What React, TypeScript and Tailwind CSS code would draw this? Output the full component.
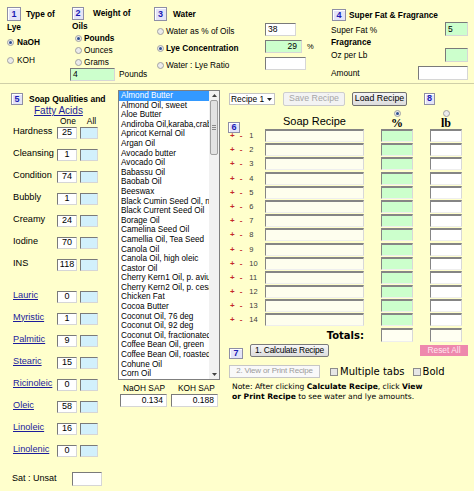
import React from 'react';

const arial = "font-['Liberation_Sans',Arial,sans-serif]";
const verdana = "font-['DejaVu_Sans',Verdana,sans-serif]";
const serif = "font-['Liberation_Serif','Times_New_Roman',serif]";

const oils = [
  'Almond Butter',
  'Almond Oil, sweet',
  'Aloe Butter',
  'Andiroba Oil,karaba,crabwood',
  'Apricot Kernal Oil',
  'Argan Oil',
  'Avocado butter',
  'Avocado Oil',
  'Babassu Oil',
  'Baobab Oil',
  'Beeswax',
  'Black Cumin Seed Oil, nigella sativa',
  'Black Current Seed Oil',
  'Borage Oil',
  'Camelina Seed Oil',
  'Camellia Oil, Tea Seed',
  'Canola Oil',
  'Canola Oil, high oleic',
  'Castor Oil',
  'Cherry Kern1 Oil, p. avium',
  'Cherry Kern2 Oil, p. cesarus',
  'Chicken Fat',
  'Cocoa Butter',
  'Coconut Oil, 76 deg',
  'Coconut Oil, 92 deg',
  'Coconut Oil, fractionated',
  'Coffee Bean Oil, green',
  'Coffee Bean Oil, roasted',
  'Cohune Oil',
  'Corn Oil',
];

const qualities = [
  { label: 'Hardness', value: '25' },
  { label: 'Cleansing', value: '1' },
  { label: 'Condition', value: '74' },
  { label: 'Bubbly', value: '1' },
  { label: 'Creamy', value: '24' },
  { label: 'Iodine', value: '70' },
  { label: 'INS', value: '118' },
];

const acids = [
  { label: 'Lauric', value: '0' },
  { label: 'Myristic', value: '1' },
  { label: 'Palmitic', value: '9' },
  { label: 'Stearic', value: '15' },
  { label: 'Ricinoleic', value: '0' },
  { label: 'Oleic', value: '58' },
  { label: 'Linoleic', value: '16' },
  { label: 'Linolenic', value: '0' },
];

const NumBox = ({ n, size }: { n: string; size: string }) => (
  <span
    className={`${size} inline-flex shrink-0 items-center justify-center border border-[#8e8ea6] bg-[#e4e4f8] text-[9px] font-bold leading-none text-[#1a1ab4] shadow-[inset_1px_1px_0_#ffffff] ${arial}`}
  >
    {n}
  </span>
);

const Radio = ({ on }: { on?: boolean }) => (
  <span className="inline-flex h-[7px] w-[7px] shrink-0 items-center justify-center rounded-full border border-[#a2a2a2] bg-[#ebebeb]">
    {on && <span className="h-[3px] w-[3px] rounded-full bg-[#2f4f8f]" />}
  </span>
);

const Check = () => (
  <span className="inline-block h-[8px] w-[8px] shrink-0 border border-[#8c8c8c] bg-[#e6e6e6]" />
);

// sunken text box, as the old form inputs draw it
const Field = ({ className = '', children }: { className?: string; children?: React.ReactNode }) => (
  <div
    className={`flex items-center border border-t-[#7a7a7a] border-l-[#7a7a7a] border-r-[#d6d6d6] border-b-[#d6d6d6] ${className}`}
  >
    {children}
  </div>
);

const Cell = ({ className = '', children }: { className?: string; children?: React.ReactNode }) => (
  <div
    className={`border-t-[2px] border-l border-r border-b border-t-[#858585] border-l-[#858585] border-r-[#d8d8d8] border-b-[#eeeeee] ${className}`}
  >
    {children}
  </div>
);

const QualityRow = ({ label, value, link }: { label: string; value: string; link?: boolean }) => (
  <div className="flex h-[14px] items-center">
    <div className="w-[57px] whitespace-nowrap pb-[3px] pl-[13px] text-[9.2px]">
      {link ? <span className="text-[#1c1c9c] underline">{label}</span> : label}
    </div>
    <Field className="h-[12px] w-[20px] justify-center bg-white text-[9px]">{value}</Field>
    <Field className="ml-[3px] h-[12px] w-[18px] bg-[#d2f0fc]" />
  </div>
);

const Scrollbar = () => (
  <div className="flex w-[10px] shrink-0 flex-col bg-[#f1f1f1]">
    <div className="flex h-[9px] items-center justify-center">
      <svg width="5" height="3" viewBox="0 0 5 3">
        <polygon points="0,3 2.5,0 5,3" fill="#404040" />
      </svg>
    </div>
    <div className="mx-[1px] flex h-[55px] flex-col items-center justify-center gap-[1px] rounded-[2px] border border-[#a0a0a0] bg-[#e2e2e2]">
      <span className="h-px w-[4px] bg-[#8a8a8a]" />
      <span className="h-px w-[4px] bg-[#8a8a8a]" />
      <span className="h-px w-[4px] bg-[#8a8a8a]" />
    </div>
    <div className="flex-1" />
    <div className="flex h-[9px] items-center justify-center">
      <svg width="5" height="3" viewBox="0 0 5 3">
        <polygon points="0,0 2.5,3 5,0" fill="#404040" />
      </svg>
    </div>
  </div>
);

const grid = 'grid grid-cols-[45px_99px_17px_32px_17px_32px]';

export default function App() {
  return (
    <div className={`h-[491px] w-[474px] overflow-hidden bg-[#ffffcc] text-black ${arial}`}>
      {/* Top: steps 1 to 4 */}
      <div className="flex h-[84px] border-b border-[#cfcfa8] text-[8.3px]">
        <div className="w-[68px] shrink-0 pl-[7px] pt-[7px]">
          <div className="flex h-[14px] items-center">
            <NumBox n="1" size="w-[14px] h-[14px]" />
            <span className="ml-[5px] font-bold">Type of</span>
          </div>
          <div className="flex h-[13px] items-center font-bold">Lye</div>
          <div className="flex h-[16px] items-center gap-[3px]">
            <Radio on />
            <span className="font-bold">NaOH</span>
          </div>
          <div className="flex h-[20px] items-center gap-[3px]">
            <Radio />
            <span>KOH</span>
          </div>
        </div>

        <div className="w-[85px] shrink-0 pt-[7px]">
          <div className="flex h-[13px] items-center pl-[4px]">
            <NumBox n="2" size="w-[12px] h-[13px]" />
            <span className="ml-[9px] font-bold">Weight of</span>
          </div>
          <div className="flex h-[12px] items-center pl-[4px] font-bold">Oils</div>
          <div className="flex h-[12px] items-center gap-[2px] pl-[7px]">
            <Radio on />
            <span className="font-bold">Pounds</span>
          </div>
          <div className="flex h-[12px] items-center gap-[2px] pl-[7px]">
            <Radio />
            <span>Ounces</span>
          </div>
          <div className="flex h-[12px] items-center gap-[2px] pl-[7px]">
            <Radio />
            <span>Grams</span>
          </div>
          <div className="flex h-[13px] items-center pl-[2px]">
            <Field className="h-[13px] w-[45px] bg-[#ccffcc] pl-[2px] text-[8.5px]">4</Field>
            <span className="ml-[4px]">Pounds</span>
          </div>
        </div>

        <div className="w-[175px] shrink-0 pt-[7px]">
          <div className="flex h-[14px] items-center pl-[1px]">
            <NumBox n="3" size="w-[13px] h-[14px]" />
            <span className="ml-[6px] font-bold">Water</span>
          </div>
          <div className="flex h-[17px] items-center">
            <div className="flex w-[112px] items-center gap-[2px] pl-[4px] pt-[3px]">
              <Radio />
              <span>Water as % of Oils</span>
            </div>
            <Field className="h-[13px] w-[31px] bg-white pl-[2px] text-[8.5px]">38</Field>
          </div>
          <div className="flex h-[17px] items-center">
            <div className="flex w-[112px] items-center gap-[2px] whitespace-nowrap pl-[4px] pt-[3px]">
              <Radio on />
              <span className="font-bold">Lye Concentration</span>
            </div>
            <Field className="h-[13px] w-[37px] justify-end bg-[#ccffcc] pr-[4px] text-[8.5px]">29</Field>
            <span className="ml-[5px] text-[7.5px]">%</span>
          </div>
          <div className="flex h-[17px] items-center">
            <div className="flex w-[112px] items-center gap-[2px] pl-[4px] pt-[3px]">
              <Radio />
              <span>Water : Lye Ratio</span>
            </div>
            <Field className="h-[13px] w-[41px] bg-white" />
          </div>
        </div>

        <div className="flex-1 pr-[6px] pt-[9px]">
          <div className="flex h-[12px] items-center pl-[4px]">
            <NumBox n="4" size="w-[14px] h-[12px]" />
            <span className="ml-[3px] whitespace-nowrap font-bold">Super Fat &amp; Fragrance</span>
          </div>
          <div className="mt-[1px] flex h-[14px] items-center justify-between pl-[3px]">
            <span className="pt-[2px]">Super Fat %</span>
            <Field className="h-[14px] w-[23px] bg-[#ccffcc] pl-[2px] text-[8.5px]">5</Field>
          </div>
          <div className="flex h-[12px] items-center pl-[3px] font-bold">Fragrance</div>
          <div className="flex h-[14px] items-center justify-between pl-[3px]">
            <span>Oz per Lb</span>
            <Field className="h-[14px] w-[23px] bg-[#ccffcc]" />
          </div>
          <div className="mt-[4px] flex h-[14px] items-center justify-between pl-[3px]">
            <span>Amount</span>
            <Field className="h-[14px] w-[50px] bg-white" />
          </div>
        </div>
      </div>

      {/* Bottom: qualities, oil list, recipe */}
      <div className="flex">
        <div className="w-[116px] shrink-0">
          <div className="mt-[9px] flex h-[12px] items-center pl-[11px]">
            <NumBox n="5" size="w-[12px] h-[12px]" />
            <span className="ml-[6px] whitespace-nowrap text-[8.5px] font-bold">Soap Qualities and</span>
          </div>
          <div className="flex h-[11px] items-center pl-[34px]">
            <span className="text-[10px] text-[#1c1c9c] underline">Fatty Acids</span>
          </div>
          <div className="flex h-[10px] items-center text-[8.4px]">
            <span className="ml-[60px]">One</span>
            <span className="ml-[11px]">All</span>
          </div>
          <div className="flex flex-col gap-[8px]">
            {qualities.map((q) => (
              <QualityRow key={q.label} label={q.label} value={q.value} />
            ))}
          </div>
          <div className="mt-[18px] flex flex-col gap-[8px]">
            {acids.map((a) => (
              <QualityRow key={a.label} label={a.label} value={a.value} link />
            ))}
          </div>
          <div className="mt-[14px] flex h-[14px] items-center">
            <span className="w-[72px] pl-[12px] text-[9px]">Sat : Unsat</span>
            <Field className="h-[14px] w-[30px] bg-white" />
          </div>
        </div>

        <div className="w-[104px] shrink-0 pl-[2px] pt-[6px]">
          <div className="flex h-[290px] w-[102px] border border-[#7f7f7f] bg-white">
            <div className="min-w-0 flex-1 overflow-hidden text-[8.2px] leading-[9.6px]">
              {oils.map((o, i) => (
                <div
                  key={o}
                  className={`overflow-hidden whitespace-nowrap pl-[2px] ${i === 0 ? 'bg-[#3399ff] text-white' : ''}`}
                >
                  {o}
                </div>
              ))}
            </div>
            <Scrollbar />
          </div>
          <div className="mt-[3px] flex h-[10px] items-center text-[8.3px]">
            <span className="ml-[5px]">NaOH SAP</span>
            <span className="ml-[13px]">KOH SAP</span>
          </div>
          <div className="mt-[1px] flex gap-[4px] pl-[2px]">
            <Field className="h-[13px] w-[47px] justify-end bg-white pr-[3px] text-[8.5px]">0.134</Field>
            <Field className="h-[13px] w-[47px] justify-end bg-white pr-[3px] text-[8.5px]">0.188</Field>
          </div>
        </div>

        <div className="flex-1 pt-[8px]">
          <div className="flex h-[14px] items-center text-[8.8px]">
            <div className="ml-[9px] flex h-[12px] w-[46px] items-center whitespace-nowrap border border-[#c4c4c4] bg-white pl-[1px] text-[8.4px]">
              <span>Recipe 1</span>
              <svg className="ml-[3px] shrink-0" width="5" height="3" viewBox="0 0 5 3">
                <polygon points="0,0 2.5,3 5,0" fill="#202020" />
              </svg>
            </div>
            <div className="ml-[8px] flex h-[14px] w-[62px] items-center justify-center rounded-[2px] border border-[#cdcdcd] bg-[#f3f3f3] text-[#a6a6a6]">
              Save Recipe
            </div>
            <div className="ml-[7px] flex h-[14px] w-[55px] items-center justify-center rounded-[2px] border border-[#707070] bg-gradient-to-b from-[#f4f4f4] to-[#dcdcdc]">
              Load Recipe
            </div>
            <div className="ml-[17px] self-start">
              <NumBox n="8" size="w-[11px] h-[12px]" />
            </div>
          </div>

          <div className={`${grid} h-[23px]`}>
            <div className="pl-[8px] pt-[7px]">
              <NumBox n="6" size="w-[12px] h-[11px]" />
            </div>
            <div className="flex items-center justify-center text-[11px]">Soap Recipe</div>
            <div />
            <div className="flex flex-col items-center pt-[4px]">
              <Radio on />
              <span className={`mt-[1px] text-[12px] font-bold leading-[10px] ${serif}`}>%</span>
            </div>
            <div />
            <div className="flex flex-col items-center pt-[4px]">
              <Radio />
              <span className={`mt-[1px] text-[12px] font-bold leading-[10px] ${serif}`}>lb</span>
            </div>
          </div>

          {Array.from({ length: 14 }, (_, i) => (
            <div key={i} className={`${grid} h-[14.2px]`}>
              <div className="flex h-[13px] items-center gap-[5px] pl-[10px] text-[8px] font-bold leading-[9px] text-[#c42a2a]">
                <span>+</span>
                <span>-</span>
                <span className="ml-[2px] text-[7.5px] font-normal text-[#3a3a3a]">{i + 1}</span>
              </div>
              <Cell className="h-[13px] bg-[#fefeee]" />
              <div />
              <Cell className="h-[13px] bg-[#ccffcc]" />
              <div />
              <Cell className="h-[13px] bg-white" />
            </div>
          ))}

          <div className={`${grid} h-[14px]`}>
            <div />
            <div className={`flex items-center justify-end text-[10px] font-bold ${verdana}`}>Totals:</div>
            <div />
            <Cell className="h-[14px] bg-[#fffff2]" />
            <div />
            <Cell className="h-[14px] bg-[#fffff2]" />
          </div>

          <div className="mt-[2px] flex h-[14px] items-center">
            <div className="ml-[9px]">
              <NumBox n="7" size="w-[14px] h-[11px]" />
            </div>
            <div className="ml-[7px] flex h-[13px] w-[79px] items-center justify-center rounded-[2px] border border-[#7a7a7a] bg-gradient-to-b from-[#f6f6f6] to-[#dddddd] text-[8.4px] tracking-[-0.2px]">
              1. Calculate Recipe
            </div>
            <div className="ml-auto mr-[6px] flex h-[11px] w-[48px] items-center justify-center bg-[#ee88ad] text-[8.4px] text-[#ffe6ef]">
              Reset All
            </div>
          </div>

          <div className="mt-[7px] flex h-[13px] items-center">
            <div className="ml-[9px] flex h-[13px] w-[91px] items-center justify-center border border-[#c6c6c6] bg-[#f9f9f9] text-[8px] tracking-[-0.2px] text-[#9c9c9c]">
              2. View or Print Recipe
            </div>
            <span className="ml-[10px]">
              <Check />
            </span>
            <span className={`ml-[2px] text-[10px] ${verdana}`}>Multiple tabs</span>
            <span className="ml-[8px]">
              <Check />
            </span>
            <span className={`ml-[2px] text-[10px] ${verdana}`}>Bold</span>
          </div>

          <div className={`mt-[4px] pl-[12px] text-[7.6px] leading-[10.5px] ${verdana}`}>
            Note: After clicking <b>Calculate Recipe</b>, click <b>View</b>
            <br />
            <b>or Print Recipe</b> to see water and lye amounts.
          </div>
        </div>
      </div>
    </div>
  );
}
